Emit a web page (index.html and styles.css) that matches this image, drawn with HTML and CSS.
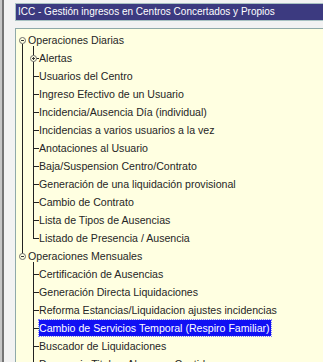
FILE: index.html
```html
<!DOCTYPE html>
<html lang="es">
  <head>
    <meta charset="UTF-8" />
    <title>ICC - Gestión ingresos</title>
    <link rel="stylesheet" href="styles.css">
  </head>
  <body>
    <div class="ventana">
      <div class="borde"></div>
      <div class="contenido">
        <div class="titulo">ICC - Gestión ingresos en Centros Concertados y Propios</div>

        <div class="arbol">
          <ul class="raiz">
            <li class="nodo abierto">
              <div class="fila"><span class="toggle menos"></span>Operaciones Diarias</div>
              <ul class="hijos">
                <li class="hoja cerrado"><div class="fila"><span class="toggle mas"></span>Alertas</div></li>
                <li class="hoja"><div class="fila">Usuarios del Centro</div></li>
                <li class="hoja"><div class="fila">Ingreso Efectivo de un Usuario</div></li>
                <li class="hoja"><div class="fila">Incidencia/Ausencia Día (individual)</div></li>
                <li class="hoja"><div class="fila">Incidencias a varios usuarios a la vez</div></li>
                <li class="hoja"><div class="fila">Anotaciones al Usuario</div></li>
                <li class="hoja"><div class="fila">Baja/Suspension Centro/Contrato</div></li>
                <li class="hoja"><div class="fila">Generación de una liquidación provisional</div></li>
                <li class="hoja"><div class="fila">Cambio de Contrato</div></li>
                <li class="hoja"><div class="fila">Lista de Tipos de Ausencias</div></li>
                <li class="hoja"><div class="fila">Listado de Presencia / Ausencia</div></li>
              </ul>
            </li>
            <li class="nodo abierto">
              <div class="fila"><span class="toggle menos"></span>Operaciones Mensuales</div>
              <ul class="hijos">
                <li class="hoja"><div class="fila">Certificación de Ausencias</div></li>
                <li class="hoja"><div class="fila">Generación Directa Liquidaciones</div></li>
                <li class="hoja"><div class="fila">Reforma Estancias/Liquidacion ajustes incidencias</div></li>
                <li class="hoja"><div class="fila"><span class="sel">Cambio de Servicios Temporal (Respiro Familiar)</span></div></li>
                <li class="hoja"><div class="fila">Buscador de Liquidaciones</div></li>
                <li class="hoja"><div class="fila">Desconsig Titulos, Abonos y Cuotidas</div></li>
              </ul>
            </li>
          </ul>
        </div>
      </div>
    </div>
  </body>
</html>
```

FILE: styles.css
```css
html, body {
  margin: 0;
  height: 100%;
  overflow: hidden;
}

body {
  background-color: #f2f2f2;
  font-family: "Liberation Sans", Arial, sans-serif;
  font-size: 10.6px;
  color: #262626;
}

.ventana {
  display: flex;
  height: 100%;
}

.borde {
  width: 2px;
  border-left: 2px solid #c6c6c6;
  background-color: #747474;
  flex-shrink: 0;
}

.contenido {
  flex: 1;
  min-width: 0;
  height: 100%;
  overflow: hidden;
  padding: 3px 0 0 11px;
  box-sizing: border-box;
}

.titulo {
  height: 16px;
  line-height: 16px;
  padding-left: 2px;
  font-size: 10px;
  background-color: #3c3a80;
  color: #ffffff;
  border: 1px solid #a9c2c2;
  border-right: none;
  white-space: nowrap;
}

.arbol {
  margin-top: 7px;
  padding: 2px 0 0 3px;
  height: 400px;
  background-color: #ffffe1;
  border: 1px solid #8fa9a9;
  border-right: none;
}

ul {
  list-style: none;
  margin: 0;
  padding: 0;
}

li {
  position: relative;
}

.fila {
  height: 18px;
  line-height: 18px;
  white-space: nowrap;
  display: flex;
  align-items: center;
}

.toggle {
  position: relative;
  width: 5px;
  height: 5px;
  border: 1px solid #6c6c6c;
  border-radius: 50%;
  background-color: #ffffe1;
  flex-shrink: 0;
  z-index: 1;
}

.toggle::before {
  content: "";
  position: absolute;
  left: 1px;
  top: 2px;
  width: 3px;
  height: 1px;
  background-color: #333;
}

.toggle.mas::after {
  content: "";
  position: absolute;
  left: 2px;
  top: 1px;
  width: 1px;
  height: 3px;
  background-color: #333;
}

.raiz > li > .fila .toggle {
  margin-right: 2px;
}

/* linea entre nodos raiz */
.raiz > li:first-child::before {
  content: "";
  position: absolute;
  left: 3px;
  top: 13px;
  bottom: -9px;
  width: 1px;
  background-color: #222;
}

.hijos {
  padding-left: 20px;
}

.hijos::before {
  content: "";
  position: absolute;
  left: 14px;
  top: 15px;
  height: 3px;
  width: 1px;
  background-color: #222;
}

.hoja::before {
  content: "";
  position: absolute;
  left: -6px;
  top: 0;
  bottom: 0;
  width: 1px;
  background-color: #222;
}

.hoja:last-child::before {
  bottom: 9px;
}

.hoja::after {
  content: "";
  position: absolute;
  left: -6px;
  top: 9px;
  width: 6px;
  height: 1px;
  background-color: #222;
}

.cerrado .toggle {
  margin-left: -9px;
  margin-right: 2px;
}

.sel {
  background-color: #1010f4;
  color: #ffffff;
  line-height: 16px;
  padding: 0 1px 0 0;
  outline: 1px dotted #8080ff;
}
```
